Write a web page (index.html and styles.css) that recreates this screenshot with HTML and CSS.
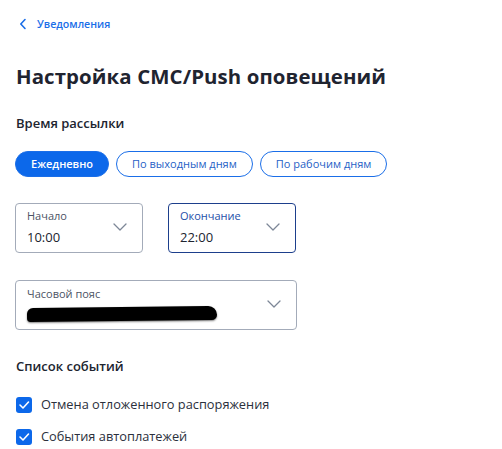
FILE: index.html
```html
<!DOCTYPE html>
<html lang="ru">
<head>
<meta charset="utf-8">
<link rel="stylesheet" href="styles.css">
</head>
<body>
<div class="page">
  <a class="back" href="#">
    <svg class="back-icon" width="8" height="12" viewBox="0 0 8 12"><path d="M6 1.5 L1.8 6 L6 10.5" fill="none" stroke="#1a6ee8" stroke-width="1.6" stroke-linecap="round" stroke-linejoin="round"/></svg>
    <span>Уведомления</span>
  </a>
  <h1 class="title">Настройка СМС/Push оповещений</h1>

  <h2 class="section">Время рассылки</h2>
  <div class="chips">
    <button class="chip chip-active">Ежедневно</button>
    <button class="chip">По выходным дням</button>
    <button class="chip">По рабочим дням</button>
  </div>

  <div class="times">
    <div class="field">
      <div class="field-text">
        <div class="field-label">Начало</div>
        <div class="field-value">10:00</div>
      </div>
      <svg class="chev" width="14" height="8" viewBox="0 0 14 8"><path d="M1 1 L7 7 L13 1" fill="none" stroke="#7d8797" stroke-width="1.3" stroke-linecap="round" stroke-linejoin="round"/></svg>
    </div>
    <div class="field field-focus">
      <div class="field-text">
        <div class="field-label">Окончание</div>
        <div class="field-value">22:00</div>
      </div>
      <svg class="chev" width="14" height="8" viewBox="0 0 14 8"><path d="M1 1 L7 7 L13 1" fill="none" stroke="#7d8797" stroke-width="1.3" stroke-linecap="round" stroke-linejoin="round"/></svg>
    </div>
  </div>

  <div class="field field-wide">
    <div class="field-text">
      <div class="field-label">Часовой пояс</div>
      <div class="redacted"></div>
    </div>
    <svg class="chev" width="14" height="8" viewBox="0 0 14 8"><path d="M1 1 L7 7 L13 1" fill="none" stroke="#7d8797" stroke-width="1.3" stroke-linecap="round" stroke-linejoin="round"/></svg>
  </div>

  <h2 class="section section-events">Список событий</h2>
  <ul class="events">
    <li class="event">
      <span class="check"><svg width="12" height="10" viewBox="0 0 12 10"><path d="M2 5 L5 8 L10.5 2" fill="none" stroke="#fff" stroke-width="1.6" stroke-linecap="round" stroke-linejoin="round"/></svg></span>
      <span>Отмена отложенного распоряжения</span>
    </li>
    <li class="event">
      <span class="check"><svg width="12" height="10" viewBox="0 0 12 10"><path d="M2 5 L5 8 L10.5 2" fill="none" stroke="#fff" stroke-width="1.6" stroke-linecap="round" stroke-linejoin="round"/></svg></span>
      <span>События автоплатежей</span>
    </li>
  </ul>
</div>
</body>
</html>
```
FILE: styles.css
```css
* { box-sizing: border-box; }
html, body { margin: 0; padding: 0; background: #fff; }
body {
  font-family: "Open Sans", "Noto Sans", sans-serif;
  color: #20242f;
}
.page {
  padding: 15px 16px 0 16px;
  display: flex;
  flex-direction: column;
}
.back {
  display: flex;
  align-items: center;
  gap: 10px;
  text-decoration: none;
  color: #1a6ee8;
  font-size: 10.6px;
  font-weight: 600;
  padding-left: 3px;
  height: 18px;
}
.title {
  margin: 29px 0 0 0;
  font-size: 20.4px;
  font-weight: 700;
  line-height: 28px;
  letter-spacing: 0.1px;
  color: #1f2430;
}
.section {
  margin: 23px 0 0 0;
  font-size: 13px;
  font-weight: 600;
  line-height: 20px;
  color: #20242f;
}
.chips {
  display: flex;
  gap: 7px;
  margin: 18px 0 0 -1px;
}
.chip {
  height: 26px;
  border-radius: 13px;
  border: 1px solid #1a6ee8;
  background: #fff;
  color: #1f5fc6;
  font-family: inherit;
  font-size: 11px;
  padding: 0 15px;
  line-height: 24px;
}
.chip-active {
  background: #0c68ea;
  color: #fff;
  font-weight: 600;
}
.times {
  display: flex;
  gap: 25px;
  margin: 26px 0 0 -1px;
}
.field {
  width: 128px;
  height: 50px;
  border: 1px solid #a3abb9;
  border-radius: 4px;
  display: flex;
  align-items: center;
  justify-content: space-between;
  padding: 0 15px 0 11px;
}
.field-focus {
  border-color: #1d3f8c;
}
.field-focus .field-label { color: #1d4fa8; }
.field-text {
  display: flex;
  flex-direction: column;
}
.field-label {
  font-size: 11px;
  line-height: 14px;
  color: #4c5364;
}
.field-value {
  font-size: 13px;
  line-height: 20px;
  margin-top: 4px;
  color: #20242f;
}
.chev { margin-top: -2px; }
.field-wide {
  width: 282px;
  margin: 27px 0 0 -1px;
}
.field-wide .field-text { margin-top: -2px; }
.redacted {
  width: 190px;
  height: 14px;
  margin-top: 6px;
  background: #000;
  border-radius: 7px 10px 6px 4px;
  transform: rotate(-0.6deg);
  box-shadow: 0 1px 2px rgba(0,0,0,0.5);
}
.section-events { margin-top: 26px; }
.events {
  list-style: none;
  margin: 20px 0 0 0;
  padding: 0;
  display: flex;
  flex-direction: column;
  gap: 15px;
}
.event {
  display: flex;
  align-items: center;
  gap: 9px;
  font-size: 12.8px;
  line-height: 17px;
  color: #2b303c;
}
.check {
  width: 16px;
  height: 16px;
  border-radius: 3px;
  background: #0c68ea;
  display: flex;
  align-items: center;
  justify-content: center;
}
```
